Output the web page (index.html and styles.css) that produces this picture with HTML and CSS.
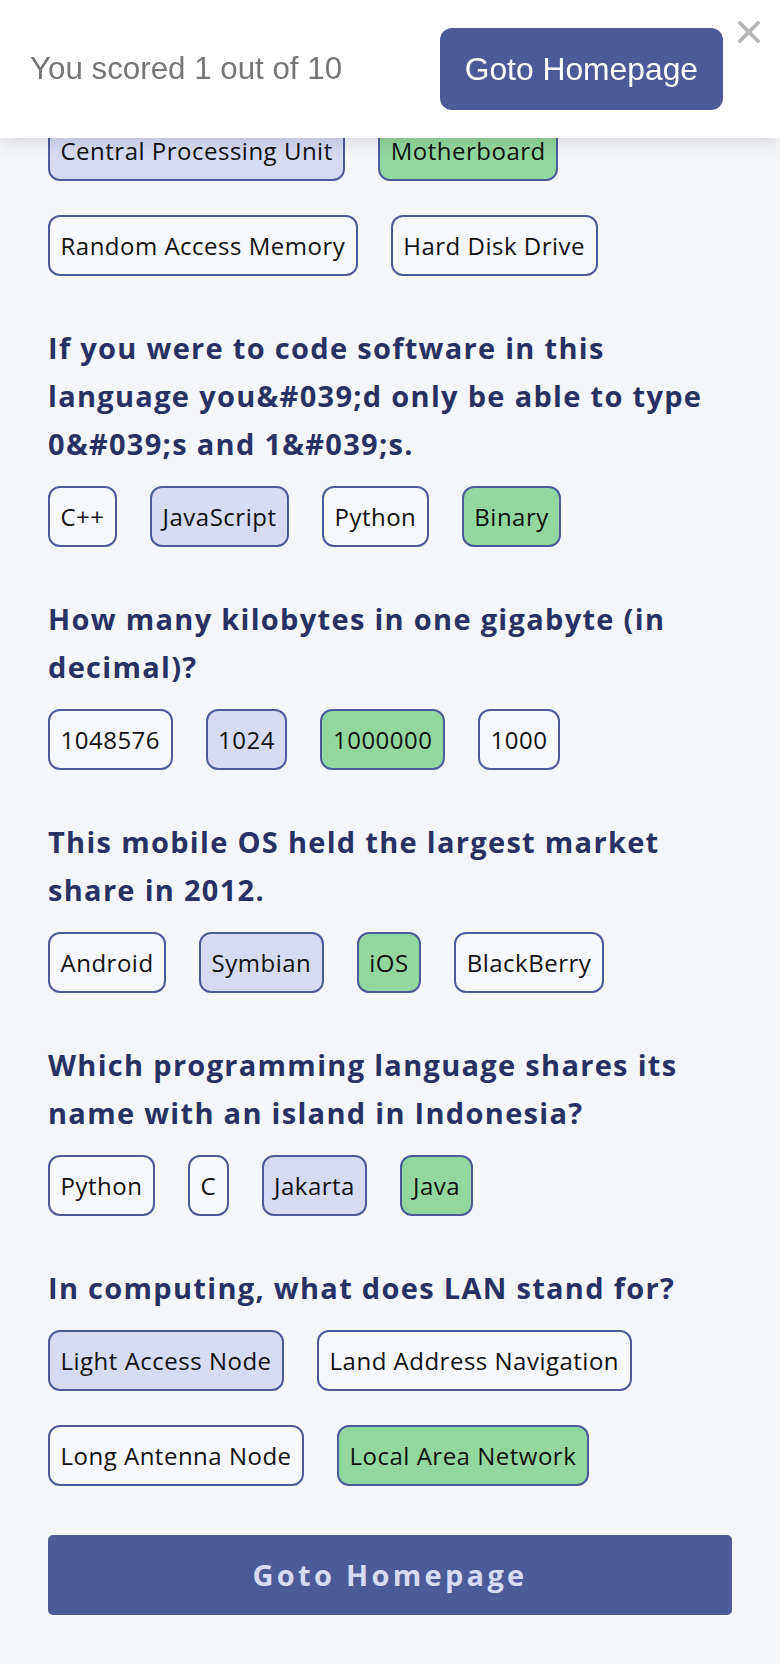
FILE: index.html
```html
<!DOCTYPE html>
<html lang="en">
<head>
  <meta charset="UTF-8">
  <meta name="viewport" content="width=device-width, initial-scale=1">
  <title>Quiz Results</title>
  <link rel="stylesheet" href="styles.css">
</head>
<body>
  <!-- Score bar stays on top of the results -->
  <header class="score-bar">
    <p class="score">You scored 1 out of 10</p>
    <a class="btn-home" href="#">Goto Homepage</a>
    <button class="close" aria-label="Close">
      <svg width="22" height="22" viewBox="0 0 22 22"><path d="M2 2 L20 20 M20 2 L2 20" stroke="#b3b3b3" stroke-width="3.6" stroke-linecap="square"/></svg>
    </button>
  </header>

  <main class="results">
    <section class="question">
      <ul class="answers">
        <li class="answer picked">Central Processing Unit</li>
        <li class="answer correct">Motherboard</li>
        <li class="answer">Random Access Memory</li>
        <li class="answer">Hard Disk Drive</li>
      </ul>
    </section>

    <section class="question">
      <h2>If you were to code software in this language you&amp;#039;d only be able to type 0&amp;#039;s and 1&amp;#039;s.</h2>
      <ul class="answers">
        <li class="answer">C++</li>
        <li class="answer picked">JavaScript</li>
        <li class="answer">Python</li>
        <li class="answer correct">Binary</li>
      </ul>
    </section>

    <section class="question">
      <h2>How many kilobytes in one gigabyte (in decimal)?</h2>
      <ul class="answers">
        <li class="answer">1048576</li>
        <li class="answer picked">1024</li>
        <li class="answer correct">1000000</li>
        <li class="answer">1000</li>
      </ul>
    </section>

    <section class="question">
      <h2>This mobile OS held the largest market share in 2012.</h2>
      <ul class="answers">
        <li class="answer">Android</li>
        <li class="answer picked">Symbian</li>
        <li class="answer correct">iOS</li>
        <li class="answer">BlackBerry</li>
      </ul>
    </section>

    <section class="question">
      <h2>Which programming language shares its name with an island in Indonesia?</h2>
      <ul class="answers">
        <li class="answer">Python</li>
        <li class="answer">C</li>
        <li class="answer picked">Jakarta</li>
        <li class="answer correct">Java</li>
      </ul>
    </section>

    <section class="question">
      <h2>In computing, what does LAN stand for?</h2>
      <ul class="answers">
        <li class="answer picked">Light Access Node</li>
        <li class="answer">Land Address Navigation</li>
        <li class="answer">Long Antenna Node</li>
        <li class="answer correct">Local Area Network</li>
      </ul>
    </section>

    <a class="btn-bottom" href="#">Goto Homepage</a>
  </main>
</body>
</html>
```

FILE: styles.css
```css
html, body {
  margin: 0; padding: 0;
  background: #f5f6fa;
  font-family: 'Open Sans', 'Liberation Sans', sans-serif;
}

/* Score bar */
.score-bar {
  position: fixed; top: 0; left: 0; right: 0;
  height: 138px;
  box-sizing: border-box;
  padding: 0 57px 0 30px;
  display: flex;
  align-items: center;
  justify-content: space-between;
  background: #fff;
  box-shadow: 0 4px 18px rgba(0,0,0,0.12);
  z-index: 10;
}
.score {
  margin: 0;
  font-family: 'Liberation Sans', Arial, sans-serif;
  font-size: 31.3px;
  color: #767676;
}
.btn-home {
  font-family: 'Liberation Sans', Arial, sans-serif;
  font-size: 31.8px;
  line-height: 36px;
  padding: 23px 25px;
  border-radius: 12px;
  background: #4d5a9a;
  color: #fff;
  text-decoration: none;
}
.close {
  position: absolute; top: 21px; right: 20px;
  padding: 0; margin: 0;
  border: 0; background: none;
  width: 22px; height: 22px;
  line-height: 0;
}

/* Results */
.results {
  padding: 120px 48px 48px;
}
.question + .question { margin-top: 48px; }
.question h2 {
  margin: 0 0 18px;
  font-size: 29px;
  line-height: 48px;
  font-weight: 700;
  letter-spacing: 1.3px;
  color: #283163;
}
.answers {
  list-style: none;
  margin: 0; padding: 0;
  display: flex;
  flex-wrap: wrap;
  gap: 34px 33px;
}
.answer {
  font-size: 24px;
  line-height: 37px;
  letter-spacing: 0.5px;
  padding: 10px 10.5px;
  border: 2px solid #4d5a9a;
  border-radius: 12px;
  background: #f7f8fc;
  color: #111;
}
.answer.picked  { background: #d6daf3; }
.answer.correct { background: #93d7a0; }

.btn-bottom {
  display: block;
  margin-top: 49px;
  height: 80px;
  line-height: 80px;
  border-radius: 5px;
  background: #4d5a9a;
  color: #d7dbf4;
  text-align: center;
  text-decoration: none;
  font-size: 29px;
  font-weight: 700;
  letter-spacing: 3.3px;
}
```
